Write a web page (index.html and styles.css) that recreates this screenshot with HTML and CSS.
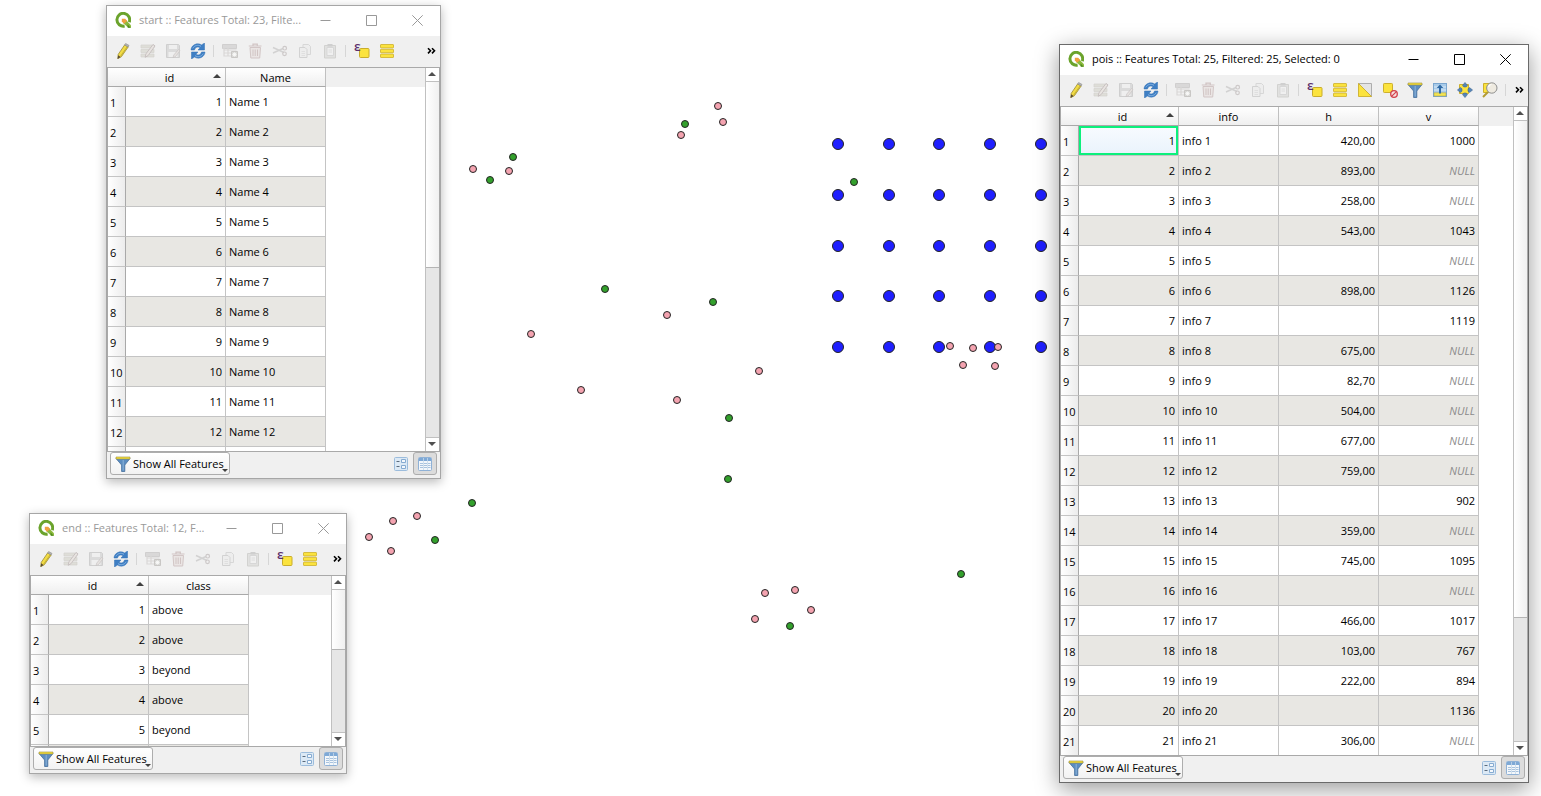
FILE: index.html
```
<!DOCTYPE html>
<html lang="en">
<head>
<meta charset="utf-8">
<title>Attribute tables</title>
<link rel="stylesheet" href="styles.css">
</head>
<body>
<svg class="defs" aria-hidden="true">
  <symbol id="i-logo" viewBox="0 0 16 16"><path d="M14.200 10.200A6.400 6.400 0 1 0 9.600 14" fill="none" stroke="#6ba32c" stroke-width="3"/><path d="M8.200 8.200h3l4.800 5v2.600h-2.800L8.200 11z" fill="#8cba3c"/><path d="M6.800 6.800h3.400l2 2.200-3.200 2.800-2.200-2.200z" fill="#f0a040"/><path d="M12.400 12.200l3.400 3.600h-3z" fill="#4f8a20"/></symbol>
  <symbol id="i-pencil" viewBox="0 0 16 16"><path d="M9.600 2l3.600 1.900-6.800 9.800-3.600 1.900.4-4.200z" fill="#f2dc45" stroke="#9c8b30" stroke-width=".8"/><path d="M9.600 2l1-1.500 3.400 1.900-.8 1.500z" fill="#b5b5b5" stroke="#8c8c8c" stroke-width=".6"/><path d="M3.200 12.200l2.400 1.700-3.100 2z" fill="#5b4c33"/><path d="M12 4L5.700 13" stroke="#b9a631" stroke-width=".8"/></symbol>
  <symbol id="i-multi" viewBox="0 0 16 16"><path d="M1 2h13v3H1zM1 6.500h13v3H1zM1 11h13v3H1z" fill="#d9d8d0" stroke="#cbcac4" stroke-width=".7"/><path d="M13 1.500l2 1.400-6.800 9.600-3 1.800.7-3.400z" fill="#e6e1dd" stroke="#b8aeae" stroke-width=".9"/></symbol>
  <symbol id="i-save" viewBox="0 0 16 16"><path d="M1.500 1.500h12l1 1v12h-13z" fill="#d5d5d5" stroke="#c4c4c4"/><path d="M4 2h8v4H4zM3.500 9h9v5h-9z" fill="#efefef"/><path d="M13.500 6.500l1.500 1.200-4.600 6-2.400 1 .8-2.700z" fill="#e3dfdc" stroke="#bbb4b4" stroke-width=".7"/></symbol>
  <symbol id="i-refresh" viewBox="0 0 16 16"><path d="M1 7C1.300 2 7-.8 11.600 1.900L14.500 0v7H8l2-2.200C8 3.200 5 4.300 4.500 7zM15 9c-.3 5-6 7.800-10.600 5.100L1.500 16V9H8l-2 2.200c2 1.600 5 .5 5.500-2.200z" fill="#3f7fc4" stroke="#3270b4" stroke-width=".5"/><path d="M2.800 5.300C4.500 2.300 8 1.400 11 3.300M13.200 10.700c-1.700 3-5.200 3.900-8.200 2" fill="none" stroke="#8bb8e4" stroke-width=".9"/></symbol>
  <symbol id="i-addrow" viewBox="0 0 16 16"><path d="M.5 1.500h14v4H.5z" fill="#d2d1d1" stroke="#c6c4c4"/><path d="M1.500 7h13M1.500 10h8M1.500 13h8M2 5v8.500M6 5v8" stroke="#d3d0cf" stroke-width="1.200"/><path d="M9.500 8.500h6v6h-6z" fill="#d2d2cf" stroke="#bdbab7"/><path d="M12.500 9.400v4.200M10.400 11.500h4.200M11 10l3 3M14 10l-3 3" stroke="#fff" stroke-width=".8"/></symbol>
  <symbol id="i-trash" viewBox="0 0 16 16"><path d="M3 4.500h10.500l-.8 10.500H3.800z" fill="#e8e2e1" stroke="#c9b9b8"/><path d="M1.800 3h12.700M6 2.700V1.200h4.300v1.500" fill="none" stroke="#c7b6b5" stroke-width="1.200"/><path d="M6 6.500v6.500M8.200 6.500v6.500M10.500 6.500v6.500" stroke="#c7b6b5"/></symbol>
  <symbol id="i-cut" viewBox="0 0 16 16"><path d="M1 4.500l11 5M1 10l10-4.500" stroke="#c9c8c8" stroke-width="1.400"/><circle cx="12.700" cy="5.200" r="1.800" fill="none" stroke="#c2bcbc" stroke-width="1.200"/><circle cx="12.500" cy="10.800" r="1.800" fill="none" stroke="#c2bcbc" stroke-width="1.200"/></symbol>
  <symbol id="i-copy" viewBox="0 0 16 16"><path d="M6 1.500h5.500l2 2v8H6z" fill="#ececec" stroke="#cfcfcf"/><path d="M2.500 4.500H8l2 2v8H2.500z" fill="#ededed" stroke="#c9c9c9"/><path d="M4.500 8.500h3.500M4.500 10.500h3.500M4.500 12.500h3.500" stroke="#d4d4d4" stroke-width=".8"/></symbol>
  <symbol id="i-paste" viewBox="0 0 16 16"><path d="M2.500 2.500h11v12.500h-11z" fill="#dddddb" stroke="#c8c8c6"/><path d="M5 4.500h6.500v8H5z" fill="#f1f1f1" stroke="#cfcfcf"/><path d="M5.500 1h5v2.500h-5z" fill="#c5c5c5"/><path d="M6.500 7h3.500M6.500 9h3.500" stroke="#d0d0d0" stroke-width=".8"/></symbol>
  <symbol id="i-expr" viewBox="0 0 16 16"><rect x="5.500" y="5.500" width="9.500" height="9" rx="1" fill="#fbe33e" stroke="#c9ad2b"/></symbol>
  <symbol id="i-all" viewBox="0 0 16 16"><g fill="#fbe33e" stroke="#d3b735" stroke-width=".9"><rect x="1.500" y="1.500" width="13" height="3.400" rx=".5"/><rect x="1.500" y="6.300" width="13" height="3.400" rx=".5"/><rect x="1.500" y="11.100" width="13" height="3.400" rx=".5"/></g></symbol>
  <symbol id="i-invert" viewBox="0 0 16 16"><path d="M1.500 1.500h13v13z" fill="#e4e4e4" stroke="#adadad"/><path d="M1.500 1.500v13h13z" fill="#fbe33e" stroke="#cdb02d" stroke-width=".9"/></symbol>
  <symbol id="i-desel" viewBox="0 0 16 16"><rect x="1.500" y="1.500" width="9" height="9" rx=".8" fill="#fbe33e" stroke="#cdb02d"/><circle cx="12" cy="12" r="3.300" fill="#f6dede" stroke="#d2404a" stroke-width="1.300"/><path d="M9.800 14.200l4.400-4.400" stroke="#d2404a" stroke-width="1.200"/></symbol>
  <symbol id="i-funnel" viewBox="0 0 16 16"><path d="M1 2.500h14L9.800 9v6.500H6.600V9z" fill="#5c8dc0" stroke="#446f9c" stroke-width=".8"/><path d="M8.200 4v10.500" stroke="#84add6" stroke-width="1.200"/><path d="M1 1h14v2H1z" fill="#f6e03c" stroke="#9a8f3c" stroke-width=".6"/></symbol>
  <symbol id="i-top" viewBox="0 0 16 16"><rect x="1.500" y="1.500" width="13" height="13" fill="#a8cbea" stroke="#7ba6cf"/><path d="M2 5h12M2 8h12" stroke="#dceaf6"/><path d="M2 10.800h12v3.200H2z" fill="#f3e454" stroke="#b3a339" stroke-width=".5"/><path d="M8 2.500l3.300 3.400H9v5.500H7V5.900H4.700z" fill="#2f6aa6"/></symbol>
  <symbol id="i-pan" viewBox="0 0 16 16"><path d="M2.500 2.500h9v9h-9z" fill="#fbe33e" stroke="#cdb02d"/><g fill="#5585b8" stroke="#385f8b" stroke-width=".5"><path d="M8 .4L10.500 3.500 9.200 5H6.800L5.500 3.500zM8 15.600l-2.500-3.100L6.800 11h2.400l1.300 1.500zM.4 8l3.100-2.500L5 6.800v2.400l-1.500 1.300zM15.600 8l-3.100 2.500L11 9.200V6.800l1.500-1.300z"/></g></symbol>
  <symbol id="i-zoom" viewBox="0 0 16 16"><path d="M1.500 1.500h9v9h-9z" fill="#fbe33e" stroke="#cdb02d"/><path d="M6 10l-5 5" stroke="#b39b32" stroke-width="2"/><circle cx="9.800" cy="6" r="5.200" fill="#eeeae0" stroke="#8f8f8f"/><path d="M6.500 5a3.500 3.500 0 0 1 3-2.500" fill="none" stroke="#fff" stroke-width="1.200"/></symbol>
  <symbol id="i-form" viewBox="0 0 14 14"><rect x=".5" y=".5" width="13" height="13" rx="1" fill="#dce9f5" stroke="#9cbcdc"/><path d="M7.500 2.500h4v3h-4zM7.500 8.500h4v3h-4z" fill="#f4f8fc" stroke="#86abd1"/><path d="M2.500 4.500h3M2.500 9.500h3" stroke="#5b6b7c"/></symbol>
  <symbol id="i-table" viewBox="0 0 14 14"><rect x=".5" y=".5" width="13" height="13" rx="1" fill="#f3f7fb" stroke="#8fb1d6"/><path d="M1 1h12v3H1z" fill="#7ea9d6"/><path d="M2 6.500h3M6 6.500h3M10 6.500h2.500M2 8.500h3M6 8.500h3M10 8.500h2.500M2 10.500h3M6 10.500h3M10 10.500h2.500" stroke="#a9c3de"/><path d="M5.500 1v12M9.500 1v12" stroke="#c8d9ea" stroke-width=".8"/></symbol>
  <symbol id="i-min" viewBox="0 0 11 11"><path d="M.5 5.500h10" stroke="currentColor"/></symbol>
  <symbol id="i-max" viewBox="0 0 11 11"><path d="M.5.5h10v10H.5z" fill="none" stroke="currentColor"/></symbol>
  <symbol id="i-close" viewBox="0 0 11 11"><path d="M.3.3l10.400 10.400M10.700.3L.3 10.700" stroke="currentColor"/></symbol>
  <symbol id="i-more" viewBox="0 0 9 8"><path d="M1 1.200L3.500 3.800 1 6.400M5 1.200l2.500 2.600L5 6.400" fill="none" stroke="#000" stroke-width="1.600"/></symbol>
</svg>

<main class="desktop">
<svg class="map" role="img" aria-label="Map of start, end and pois points">
  <g class="poi">
    <circle cx="838" cy="144" r="5.500"/><circle cx="889" cy="144" r="5.500"/><circle cx="939" cy="144" r="5.500"/><circle cx="990" cy="144" r="5.500"/><circle cx="1041" cy="144" r="5.500"/>
    <circle cx="838" cy="195" r="5.500"/><circle cx="889" cy="195" r="5.500"/><circle cx="939" cy="195" r="5.500"/><circle cx="990" cy="195" r="5.500"/><circle cx="1041" cy="195" r="5.500"/>
    <circle cx="838" cy="246" r="5.500"/><circle cx="889" cy="246" r="5.500"/><circle cx="939" cy="246" r="5.500"/><circle cx="990" cy="246" r="5.500"/><circle cx="1041" cy="246" r="5.500"/>
    <circle cx="838" cy="296" r="5.500"/><circle cx="889" cy="296" r="5.500"/><circle cx="939" cy="296" r="5.500"/><circle cx="990" cy="296" r="5.500"/><circle cx="1041" cy="296" r="5.500"/>
    <circle cx="838" cy="347" r="5.500"/><circle cx="889" cy="347" r="5.500"/><circle cx="939" cy="347" r="5.500"/><circle cx="990" cy="347" r="5.500"/><circle cx="1041" cy="347" r="5.500"/>
  </g>
  <g class="start-pt">
    <circle cx="718" cy="106" r="3.500"/><circle cx="723" cy="122" r="3.500"/><circle cx="681" cy="135" r="3.500"/><circle cx="473" cy="169" r="3.500"/><circle cx="509" cy="171" r="3.500"/>
    <circle cx="531" cy="334" r="3.500"/><circle cx="667" cy="315" r="3.500"/><circle cx="581" cy="390" r="3.500"/><circle cx="677" cy="400" r="3.500"/><circle cx="759" cy="371" r="3.500"/>
    <circle cx="950" cy="346" r="3.500"/><circle cx="973" cy="348" r="3.500"/><circle cx="998" cy="347" r="3.500"/><circle cx="963" cy="365" r="3.500"/><circle cx="995" cy="366" r="3.500"/>
    <circle cx="417" cy="516" r="3.500"/><circle cx="393" cy="521" r="3.500"/><circle cx="369" cy="537" r="3.500"/><circle cx="391" cy="551" r="3.500"/>
    <circle cx="765" cy="593" r="3.500"/><circle cx="795" cy="590" r="3.500"/><circle cx="811" cy="610" r="3.500"/><circle cx="755" cy="619" r="3.500"/>
  </g>
  <g class="end-pt">
    <circle cx="685" cy="124" r="3.500"/><circle cx="513" cy="157" r="3.500"/><circle cx="490" cy="180" r="3.500"/><circle cx="854" cy="182" r="3.500"/><circle cx="605" cy="289" r="3.500"/><circle cx="713" cy="302" r="3.500"/>
    <circle cx="729" cy="418" r="3.500"/><circle cx="728" cy="479" r="3.500"/><circle cx="472" cy="503" r="3.500"/><circle cx="435" cy="540" r="3.500"/><circle cx="961" cy="574" r="3.500"/><circle cx="790" cy="626" r="3.500"/>
  </g>
</svg>

<section class="window win-start" aria-label="start attribute table">
  <header class="titlebar">
    <svg class="ic"><use href="#i-logo"/></svg><h2>start :: Features Total: 23, Filte...</h2>
    <button aria-label="Minimize"><svg class="wc"><use href="#i-min"/></svg></button><button aria-label="Maximize"><svg class="wc"><use href="#i-max"/></svg></button><button aria-label="Close"><svg class="wc"><use href="#i-close"/></svg></button>
  </header>
  <div class="toolbar">
    <button aria-label="Toggle editing"><svg class="ic"><use href="#i-pencil"/></svg></button><button disabled aria-label="Multi edit"><svg class="ic"><use href="#i-multi"/></svg></button><button disabled aria-label="Save edits"><svg class="ic"><use href="#i-save"/></svg></button><button aria-label="Reload"><svg class="ic"><use href="#i-refresh"/></svg></button><i class="sep"></i>
    <button disabled aria-label="Add feature"><svg class="ic"><use href="#i-addrow"/></svg></button><button disabled aria-label="Delete"><svg class="ic"><use href="#i-trash"/></svg></button><button disabled aria-label="Cut"><svg class="ic"><use href="#i-cut"/></svg></button><button disabled aria-label="Copy"><svg class="ic"><use href="#i-copy"/></svg></button><button disabled aria-label="Paste"><svg class="ic"><use href="#i-paste"/></svg></button><i class="sep"></i>
    <button class="expr" aria-label="Select by expression"><svg class="ic"><use href="#i-expr"/></svg><span>ε</span></button><button aria-label="Select all"><svg class="ic"><use href="#i-all"/></svg></button>
    <button class="more" aria-label="More"><svg><use href="#i-more"/></svg></button>
  </div>
  <div class="grid">
    <div class="view">
      <table>
        <colgroup><col class="c-num"><col class="c-data"><col class="c-data"></colgroup>
        <thead><tr><th></th><th class="sorted">id</th><th>Name</th></tr></thead>
        <tbody>
          <tr><th>1</th><td class="n">1</td><td>Name 1</td></tr>
          <tr><th>2</th><td class="n">2</td><td>Name 2</td></tr>
          <tr><th>3</th><td class="n">3</td><td>Name 3</td></tr>
          <tr><th>4</th><td class="n">4</td><td>Name 4</td></tr>
          <tr><th>5</th><td class="n">5</td><td>Name 5</td></tr>
          <tr><th>6</th><td class="n">6</td><td>Name 6</td></tr>
          <tr><th>7</th><td class="n">7</td><td>Name 7</td></tr>
          <tr><th>8</th><td class="n">8</td><td>Name 8</td></tr>
          <tr><th>9</th><td class="n">9</td><td>Name 9</td></tr>
          <tr><th>10</th><td class="n">10</td><td>Name 10</td></tr>
          <tr><th>11</th><td class="n">11</td><td>Name 11</td></tr>
          <tr><th>12</th><td class="n">12</td><td>Name 12</td></tr>
          <tr><th></th><td class="n"></td><td></td></tr>
        </tbody>
      </table>
    </div>
    <div class="scroll"><button class="up" aria-label="Scroll up"></button><div class="track"><div class="thumb"></div></div><button class="down" aria-label="Scroll down"></button></div>
  </div>
  <footer class="status">
    <button class="filter"><svg class="ic"><use href="#i-funnel"/></svg>Show All Features</button>
    <button class="mode" aria-label="Form view"><svg><use href="#i-form"/></svg></button><button class="mode on" aria-label="Table view" aria-pressed="true"><svg><use href="#i-table"/></svg></button>
  </footer>
</section>

<section class="window win-end" aria-label="end attribute table">
  <header class="titlebar">
    <svg class="ic"><use href="#i-logo"/></svg><h2>end :: Features Total: 12, F...</h2>
    <button aria-label="Minimize"><svg class="wc"><use href="#i-min"/></svg></button><button aria-label="Maximize"><svg class="wc"><use href="#i-max"/></svg></button><button aria-label="Close"><svg class="wc"><use href="#i-close"/></svg></button>
  </header>
  <div class="toolbar">
    <button aria-label="Toggle editing"><svg class="ic"><use href="#i-pencil"/></svg></button><button disabled aria-label="Multi edit"><svg class="ic"><use href="#i-multi"/></svg></button><button disabled aria-label="Save edits"><svg class="ic"><use href="#i-save"/></svg></button><button aria-label="Reload"><svg class="ic"><use href="#i-refresh"/></svg></button><i class="sep"></i>
    <button disabled aria-label="Add feature"><svg class="ic"><use href="#i-addrow"/></svg></button><button disabled aria-label="Delete"><svg class="ic"><use href="#i-trash"/></svg></button><button disabled aria-label="Cut"><svg class="ic"><use href="#i-cut"/></svg></button><button disabled aria-label="Copy"><svg class="ic"><use href="#i-copy"/></svg></button><button disabled aria-label="Paste"><svg class="ic"><use href="#i-paste"/></svg></button><i class="sep"></i>
    <button class="expr" aria-label="Select by expression"><svg class="ic"><use href="#i-expr"/></svg><span>ε</span></button><button aria-label="Select all"><svg class="ic"><use href="#i-all"/></svg></button>
    <button class="more" aria-label="More"><svg><use href="#i-more"/></svg></button>
  </div>
  <div class="grid">
    <div class="view">
      <table>
        <colgroup><col class="c-num"><col class="c-data"><col class="c-data"></colgroup>
        <thead><tr><th></th><th class="sorted">id</th><th>class</th></tr></thead>
        <tbody>
          <tr><th>1</th><td class="n">1</td><td>above</td></tr>
          <tr><th>2</th><td class="n">2</td><td>above</td></tr>
          <tr><th>3</th><td class="n">3</td><td>beyond</td></tr>
          <tr><th>4</th><td class="n">4</td><td>above</td></tr>
          <tr><th>5</th><td class="n">5</td><td>beyond</td></tr>
          <tr><th></th><td class="n"></td><td></td></tr>
        </tbody>
      </table>
    </div>
    <div class="scroll"><button class="up" aria-label="Scroll up"></button><div class="track"><div class="thumb"></div></div><button class="down" aria-label="Scroll down"></button></div>
  </div>
  <footer class="status">
    <button class="filter"><svg class="ic"><use href="#i-funnel"/></svg>Show All Features</button>
    <button class="mode" aria-label="Form view"><svg><use href="#i-form"/></svg></button><button class="mode on" aria-label="Table view" aria-pressed="true"><svg><use href="#i-table"/></svg></button>
  </footer>
</section>

<section class="window active win-pois" aria-label="pois attribute table">
  <header class="titlebar">
    <svg class="ic"><use href="#i-logo"/></svg><h2>pois :: Features Total: 25, Filtered: 25, Selected: 0</h2>
    <button aria-label="Minimize"><svg class="wc"><use href="#i-min"/></svg></button><button aria-label="Maximize"><svg class="wc"><use href="#i-max"/></svg></button><button aria-label="Close"><svg class="wc"><use href="#i-close"/></svg></button>
  </header>
  <div class="toolbar">
    <button aria-label="Toggle editing"><svg class="ic"><use href="#i-pencil"/></svg></button><button disabled aria-label="Multi edit"><svg class="ic"><use href="#i-multi"/></svg></button><button disabled aria-label="Save edits"><svg class="ic"><use href="#i-save"/></svg></button><button aria-label="Reload"><svg class="ic"><use href="#i-refresh"/></svg></button><i class="sep"></i>
    <button disabled aria-label="Add feature"><svg class="ic"><use href="#i-addrow"/></svg></button><button disabled aria-label="Delete"><svg class="ic"><use href="#i-trash"/></svg></button><button disabled aria-label="Cut"><svg class="ic"><use href="#i-cut"/></svg></button><button disabled aria-label="Copy"><svg class="ic"><use href="#i-copy"/></svg></button><button disabled aria-label="Paste"><svg class="ic"><use href="#i-paste"/></svg></button><i class="sep"></i>
    <button class="expr" aria-label="Select by expression"><svg class="ic"><use href="#i-expr"/></svg><span>ε</span></button><button aria-label="Select all"><svg class="ic"><use href="#i-all"/></svg></button><button aria-label="Invert selection"><svg class="ic"><use href="#i-invert"/></svg></button><button aria-label="Deselect all"><svg class="ic"><use href="#i-desel"/></svg></button><button aria-label="Filter by form"><svg class="ic"><use href="#i-funnel"/></svg></button><button aria-label="Move selection to top"><svg class="ic"><use href="#i-top"/></svg></button><button aria-label="Pan to rows"><svg class="ic"><use href="#i-pan"/></svg></button><button aria-label="Zoom to rows"><svg class="ic"><use href="#i-zoom"/></svg></button><i class="sep"></i>
    <button class="more" aria-label="More"><svg><use href="#i-more"/></svg></button>
  </div>
  <div class="grid">
    <div class="view">
      <table>
        <colgroup><col class="c-num"><col class="c-data"><col class="c-data"><col class="c-data"><col class="c-data"></colgroup>
        <thead><tr><th></th><th class="sorted">id</th><th>info</th><th>h</th><th>v</th></tr></thead>
        <tbody>
          <tr><th>1</th><td class="n current">1</td><td>info 1</td><td class="n">420,00</td><td class="n">1000</td></tr>
          <tr><th>2</th><td class="n">2</td><td>info 2</td><td class="n">893,00</td><td class="n null">NULL</td></tr>
          <tr><th>3</th><td class="n">3</td><td>info 3</td><td class="n">258,00</td><td class="n null">NULL</td></tr>
          <tr><th>4</th><td class="n">4</td><td>info 4</td><td class="n">543,00</td><td class="n">1043</td></tr>
          <tr><th>5</th><td class="n">5</td><td>info 5</td><td class="n"></td><td class="n null">NULL</td></tr>
          <tr><th>6</th><td class="n">6</td><td>info 6</td><td class="n">898,00</td><td class="n">1126</td></tr>
          <tr><th>7</th><td class="n">7</td><td>info 7</td><td class="n"></td><td class="n">1119</td></tr>
          <tr><th>8</th><td class="n">8</td><td>info 8</td><td class="n">675,00</td><td class="n null">NULL</td></tr>
          <tr><th>9</th><td class="n">9</td><td>info 9</td><td class="n">82,70</td><td class="n null">NULL</td></tr>
          <tr><th>10</th><td class="n">10</td><td>info 10</td><td class="n">504,00</td><td class="n null">NULL</td></tr>
          <tr><th>11</th><td class="n">11</td><td>info 11</td><td class="n">677,00</td><td class="n null">NULL</td></tr>
          <tr><th>12</th><td class="n">12</td><td>info 12</td><td class="n">759,00</td><td class="n null">NULL</td></tr>
          <tr><th>13</th><td class="n">13</td><td>info 13</td><td class="n"></td><td class="n">902</td></tr>
          <tr><th>14</th><td class="n">14</td><td>info 14</td><td class="n">359,00</td><td class="n null">NULL</td></tr>
          <tr><th>15</th><td class="n">15</td><td>info 15</td><td class="n">745,00</td><td class="n">1095</td></tr>
          <tr><th>16</th><td class="n">16</td><td>info 16</td><td class="n"></td><td class="n null">NULL</td></tr>
          <tr><th>17</th><td class="n">17</td><td>info 17</td><td class="n">466,00</td><td class="n">1017</td></tr>
          <tr><th>18</th><td class="n">18</td><td>info 18</td><td class="n">103,00</td><td class="n">767</td></tr>
          <tr><th>19</th><td class="n">19</td><td>info 19</td><td class="n">222,00</td><td class="n">894</td></tr>
          <tr><th>20</th><td class="n">20</td><td>info 20</td><td class="n"></td><td class="n">1136</td></tr>
          <tr><th>21</th><td class="n">21</td><td>info 21</td><td class="n">306,00</td><td class="n null">NULL</td></tr>
        </tbody>
      </table>
    </div>
    <div class="scroll"><button class="up" aria-label="Scroll up"></button><div class="track"><div class="thumb"></div></div><button class="down" aria-label="Scroll down"></button></div>
  </div>
  <footer class="status">
    <button class="filter"><svg class="ic"><use href="#i-funnel"/></svg>Show All Features</button>
    <button class="mode" aria-label="Form view"><svg><use href="#i-form"/></svg></button><button class="mode on" aria-label="Table view" aria-pressed="true"><svg><use href="#i-table"/></svg></button>
  </footer>
</section>
</main>
</body>
</html>
```
FILE: styles.css
```
* { box-sizing: border-box; }
body { margin: 0; background: #fff; color: #000; font: 11px/16px "Open Sans", "Noto Sans", sans-serif; }
button { margin: 0; padding: 0; border: 0; background: none; color: inherit; font: inherit; }
.defs { position: absolute; width: 0; height: 0; }

.desktop { position: relative; min-height: 100vh; overflow: hidden; }
.map { position: absolute; inset: 0; width: 100%; height: 100%; }
.map circle { stroke: #232323; }
.poi { fill: #1f1fff; }
.start-pt { fill: #f4a3b0; }
.end-pt { fill: #33a02c; }

/* Windows */
.window { position: absolute; display: flex; flex-direction: column; border: 1px solid #a6a6a6; background: #f0f0f0; box-shadow: 0 3px 10px rgba(0, 0, 0, .28); }
.window.active { border-color: #6a6a6a; box-shadow: 0 6px 22px rgba(0, 0, 0, .4); }
.win-start { left: 106px; top: 5px; width: 335px; }
.win-end { left: 29px; top: 513px; width: 318px; }
.win-pois { left: 1059px; top: 44px; width: 470px; }

.ic { display: block; flex: none; width: 16px; height: 16px; }
.wc { display: block; width: 11px; height: 11px; margin: auto; }

.titlebar { display: flex; align-items: center; height: 30px; padding: 0 0 2px 8px; background: #fff; color: #999; }
.active .titlebar { color: #000; }
.titlebar h2 { flex: 1; min-width: 0; margin: 0; padding-left: 8px; font-size: 11px; font-weight: 400; white-space: nowrap; }
.titlebar button { flex: none; width: 46px; height: 28px; }

.toolbar { display: flex; align-items: center; height: 31px; padding: 0 4px 2px 3px; }
.toolbar button { display: flex; flex: none; align-items: center; justify-content: center; width: 25px; height: 25px; }
.toolbar button:disabled { opacity: .75; }
.toolbar .sep { flex: none; width: 1px; height: 12px; margin: 0 3px; background: #d6d6d6; }
.toolbar .more { width: 10px; margin-left: auto; }
.more svg { width: 9px; height: 8px; }
.expr { position: relative; }
.expr span { position: absolute; left: 5px; top: 0; color: #5b2f6b; font-size: 13px; font-weight: 600; }

/* Attribute grid */
.grid { display: flex; border: 1px solid #a9a9a9; background: #fff; }
.view { flex: 1; min-width: 0; overflow: hidden; background: linear-gradient(#f0f0f0 19px, #fff 19px); }
.win-start .view { height: 383px; }
.win-end .view { height: 170px; }
.win-pois .view { height: 648px; }
table { table-layout: fixed; width: 0; border-collapse: separate; border-spacing: 0; }
.c-num { width: 18px; }
.c-data { width: 100px; }
th, td { overflow: hidden; padding: 0; font-weight: 400; white-space: nowrap; }
thead th { position: relative; height: 19px; padding-top: 1px; border-right: 1px solid #c0c0c0; border-bottom: 1px solid #a9a9a9; background: linear-gradient(#fff, #efefef); text-align: center; }
thead th:first-child { border-right: 0; }
thead th.sorted { padding-right: 12px; }
thead th.sorted::after { content: ""; position: absolute; right: 4px; top: 6px; border: 4px solid transparent; border-top: 0; border-bottom-color: #404040; }
tbody th { height: 30px; padding: 2px 0 0 2px; border-right: 1px solid #a9a9a9; border-bottom: 1px solid #c4c4c4; background: linear-gradient(90deg, #fff, #ececec); text-align: left; }
tbody td { height: 30px; padding: 0 3px; border-right: 1px solid #c4c4c4; border-bottom: 1px solid #c4c4c4; background: #fff; }
tbody tr:nth-child(even) td { background: #e8e7e3; }
td.n { text-align: right; }
td.null { color: #8b8b8b; font-style: italic; }
tbody td.current { background: linear-gradient(#f8fbff, #e9f3fc); box-shadow: inset 0 0 0 2px #0cf07c; }

/* Scroll bar */
.scroll { display: flex; flex: none; flex-direction: column; width: 14px; border-left: 1px solid #c0c0c0; background: #e6e6e6; }
.scroll button { display: flex; align-items: center; justify-content: center; height: 14px; padding: 0 1px 2px 0; background: #fff; }
.scroll button::before { content: ""; border: 4px solid transparent; }
.scroll .up { border-bottom: 1px solid #c0c0c0; }
.scroll .up::before { border-top: 0; border-bottom-color: #505050; }
.scroll .down { border-top: 1px solid #c0c0c0; }
.scroll .down::before { border-bottom: 0; border-top-color: #505050; }
.track { flex: 1; }
.thumb { border-bottom: 1px solid #b4b4b4; background: linear-gradient(90deg, #fff, #f0f0f0); }
.win-start .thumb { height: 186px; }
.win-end .thumb { height: 60px; }
.win-pois .thumb { height: 497px; }

/* Bottom bar */
.status { display: flex; align-items: center; height: 26px; padding: 0 3px 3px 3px; }
.filter { position: relative; display: flex; align-items: center; gap: 2px; width: 120px; height: 23px; margin-right: auto; padding-left: 4px; border: 1px solid #adadad; border-radius: 3px; background: linear-gradient(#fff, #f2f2f2); white-space: nowrap; }
.filter::after { content: ""; position: absolute; right: 1px; bottom: 2px; border: 3px solid transparent; border-bottom: 0; border-top-color: #404040; }
.mode { display: flex; align-items: center; justify-content: center; width: 24px; height: 23px; }
.mode svg { width: 14px; height: 14px; }
.mode.on { border: 1px solid #adadad; border-radius: 3px; background: #dcdcdc; }
```
